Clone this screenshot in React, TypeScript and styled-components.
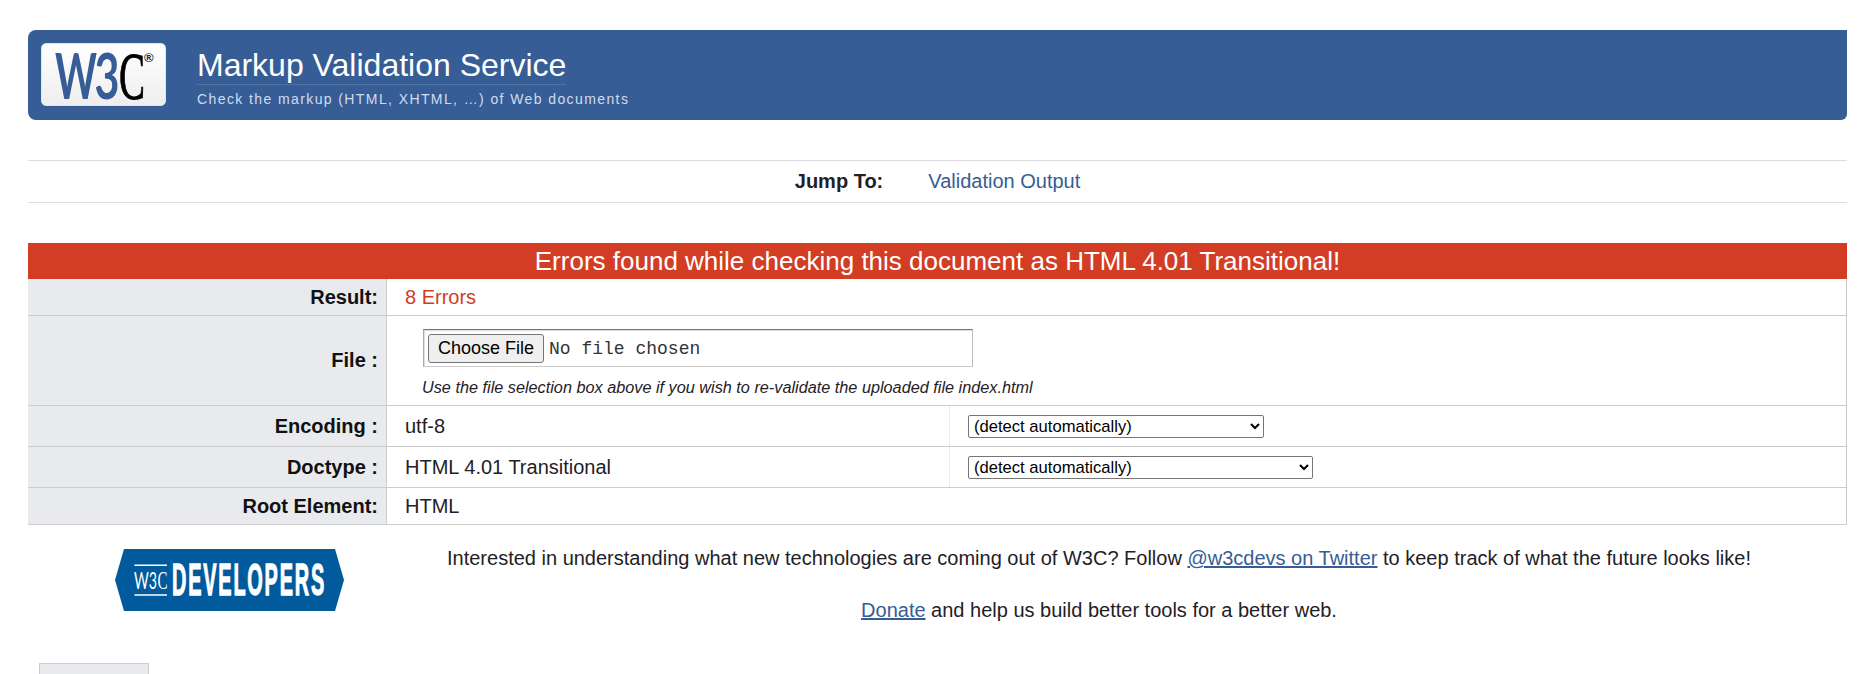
import React from 'react';
import styled, { createGlobalStyle } from 'styled-components';

const GlobalStyle = createGlobalStyle`
  * { box-sizing: border-box; }
  body {
    margin: 0;
    background: #fff;
    color: #1f2126;
    font-family: Arial, "Liberation Sans", sans-serif;
    font-size: 20px;
    line-height: 23px;
  }
`;

const Page = styled.div`
  height: 674px;
  overflow: hidden;
  padding: 30px 21px 0 28px;
`;

const Banner = styled.header`
  display: flex;
  align-items: flex-start;
  height: 90px;
  padding: 13px 0 0 13px;
  background: #365d95;
  border-radius: 8px 0 6px 8px;
`;

const LogoTile = styled.div`
  width: 125px;
  height: 63px;
  border-radius: 5px;
  border: 1px solid #dfe5ee;
  background: linear-gradient(#fff, #eee);
  svg { display: block; overflow: visible; }
`;

const Titles = styled.div`
  margin-left: 31px;
  padding-top: 3px;
  color: #fff;
`;

const Title = styled.h1`
  width: fit-content;
  height: 39px;
  margin: 0;
  border-bottom: 1px solid #5073a6;
  font-size: 32px;
  font-weight: 400;
  line-height: 39px;
`;

const Tagline = styled.p`
  margin: 6px 0 0;
  color: #d0dcee;
  font-size: 14px;
  line-height: 16px;
  letter-spacing: 1.4px;
`;

const JumpBar = styled.nav`
  display: flex;
  justify-content: center;
  gap: 45px;
  height: 43px;
  margin-top: 40px;
  padding-top: 9px;
  border: solid #dcdcde;
  border-width: 1px 0;
`;

const Link = styled.a<{ $plain?: boolean }>`
  color: #365d95;
  text-decoration: ${(p) => (p.$plain ? 'none' : 'underline')};
  text-decoration-thickness: 2px;
`;

const Results = styled.section`
  margin-top: 40px;
`;

const Verdict = styled.h2`
  height: 36px;
  margin: 0;
  background: #d23d24;
  color: #fff;
  font-size: 26px;
  font-weight: 400;
  line-height: 37px;
  text-align: center;
`;

const Row = styled.div<{ $h: number }>`
  display: grid;
  grid-template-columns: 358px 1fr;
  height: ${(p) => p.$h}px;
  border: solid #ccc;
  border-width: 0 1px 1px 0;
  border-left: 1px solid #e9eaee;
`;

const Label = styled.div`
  display: flex;
  align-items: center;
  justify-content: flex-end;
  padding-right: 8px;
  border-right: 1px solid #ccc;
  background: #e9eaee;
  color: #111;
  font-weight: 700;
`;

const Value = styled.div<{ $error?: boolean }>`
  display: flex;
  align-items: center;
  padding-left: 18px;
  color: ${(p) => (p.$error ? '#d23d24' : 'inherit')};
`;

const SplitValue = styled.div`
  display: grid;
  grid-template-columns: 562px 1fr;
`;

const Choice = styled.div`
  display: flex;
  align-items: center;
  padding-left: 18px;
  border-left: 1px solid #e9eaee;
`;

const Select = styled.select<{ $w: number }>`
  width: ${(p) => p.$w}px;
  height: 23px;
  padding: 0 1px;
  border: 1px solid #767676;
  border-radius: 2px;
  background: #fff;
  color: #000;
  font-family: inherit;
  font-size: 16.6px;
`;

const FileCell = styled.div`
  padding: 13px 0 0 36px;
`;

const FileInput = styled.input`
  display: block;
  width: 550px;
  height: 38px;
  padding: 4px;
  border: 1px solid;
  border-color: #767676 #bbb #ccc #aaa;
  box-shadow: inset 1px 1px 1px #ddd;
  color: #333;
  font-family: "Courier New", "Liberation Mono", monospace;
  font-size: 18px;
  line-height: 29px;

  &::file-selector-button {
    height: 29px;
    margin-right: 5px;
    padding: 0 9px;
    border: 1px solid #767676;
    border-radius: 3px;
    background: #efefef;
    color: #000;
    font-family: Arial, "Liberation Sans", sans-serif;
    font-size: 18px;
  }
`;

const Hint = styled.p`
  margin: 9px 0 0 -1px;
  font-size: 16.25px;
  font-style: italic;
  line-height: 22px;
`;

const Promo = styled.section`
  display: grid;
  grid-template-columns: 275px 1fr;
  height: 138px;
  padding: 24px 39px 0 87px;
  svg { display: block; overflow: visible; }
`;

const PromoText = styled.div`
  display: flex;
  flex-direction: column;
  gap: 29px;
  margin-top: -2px;
  text-align: center;
`;

const Tab = styled.div`
  width: 110px;
  height: 30px;
  margin-left: 11px;
  border: 1px solid #ccc;
  background: #e9eaee;
`;

const W3CLogo = () => (
  <svg width="123" height="61" viewBox="0 0 123 61" role="img">
    <g fill="#365d95" fontFamily="Lato, sans-serif" fontWeight="700">
      <text x="13" y="54.5" fontSize="63" textLength="42" lengthAdjust="spacingAndGlyphs">W</text>
      <text x="52.5" y="54.5" fontSize="63" textLength="25" lengthAdjust="spacingAndGlyphs">3</text>
    </g>
    <text x="77" y="54.5" fontSize="68" fontFamily="Liberation Serif, serif" fill="#000" stroke="#000" strokeWidth="1" textLength="26" lengthAdjust="spacingAndGlyphs">C</text>
    <text x="102" y="18" fontSize="13" fontFamily="Liberation Sans, sans-serif" fontWeight="700" fill="#222">®</text>
  </svg>
);

const DevelopersBadge = () => (
  <svg width="229" height="62" viewBox="0 0 229 62" role="img">
    <path d="M9 0H220L229 31L220 62H9L0 31Z" fill="#005a9c" />
    <path d="M19.5 16.2H52M19.5 46H52" stroke="#fff" strokeWidth="1.5" />
    <g fill="#fff">
      <text x="19" y="40" fontSize="24" fontFamily="Lato, sans-serif" textLength="23" lengthAdjust="spacingAndGlyphs">W3</text>
      <text x="42.5" y="40" fontSize="25" fontFamily="Liberation Serif, serif" textLength="10" lengthAdjust="spacingAndGlyphs">C</text>
      <text x="57" y="46.3" fontSize="44" fontFamily="Liberation Sans, sans-serif" fontWeight="700" stroke="#fff" strokeWidth="1.3" letterSpacing="4" textLength="154" lengthAdjust="spacingAndGlyphs">DEVELOPERS</text>
    </g>
  </svg>
);

export default function App() {
  return (
    <>
      <GlobalStyle />
      <Page>
        <Banner>
          <LogoTile><W3CLogo /></LogoTile>
          <Titles>
            <Title>Markup Validation Service</Title>
            <Tagline>Check the markup (HTML, XHTML, …) of Web documents</Tagline>
          </Titles>
        </Banner>
        <JumpBar>
          <strong>Jump To:</strong>
          <Link $plain>Validation Output</Link>
        </JumpBar>
        <Results>
          <Verdict>Errors found while checking this document as HTML 4.01 Transitional!</Verdict>
          <Row $h={37}>
            <Label>Result:</Label>
            <Value $error>8 Errors</Value>
          </Row>
          <Row $h={90}>
            <Label>File :</Label>
            <FileCell>
              <FileInput type="file" />
              <Hint>Use the file selection box above if you wish to re-validate the uploaded file index.html</Hint>
            </FileCell>
          </Row>
          <Row $h={41}>
            <Label>Encoding :</Label>
            <SplitValue>
              <Value>utf-8</Value>
              <Choice><Select $w={296}><option>(detect automatically)</option></Select></Choice>
            </SplitValue>
          </Row>
          <Row $h={41}>
            <Label>Doctype :</Label>
            <SplitValue>
              <Value>HTML 4.01 Transitional</Value>
              <Choice><Select $w={345}><option>(detect automatically)</option></Select></Choice>
            </SplitValue>
          </Row>
          <Row $h={37}>
            <Label>Root Element:</Label>
            <Value>HTML</Value>
          </Row>
        </Results>
        <Promo>
          <DevelopersBadge />
          <PromoText>
            <span>
              Interested in understanding what new technologies are coming out of W3C? Follow{' '}
              <Link>@w3cdevs on Twitter</Link> to keep track of what the future looks like!
            </span>
            <span><Link>Donate</Link> and help us build better tools for a better web.</span>
          </PromoText>
        </Promo>
        <Tab />
      </Page>
    </>
  );
}
